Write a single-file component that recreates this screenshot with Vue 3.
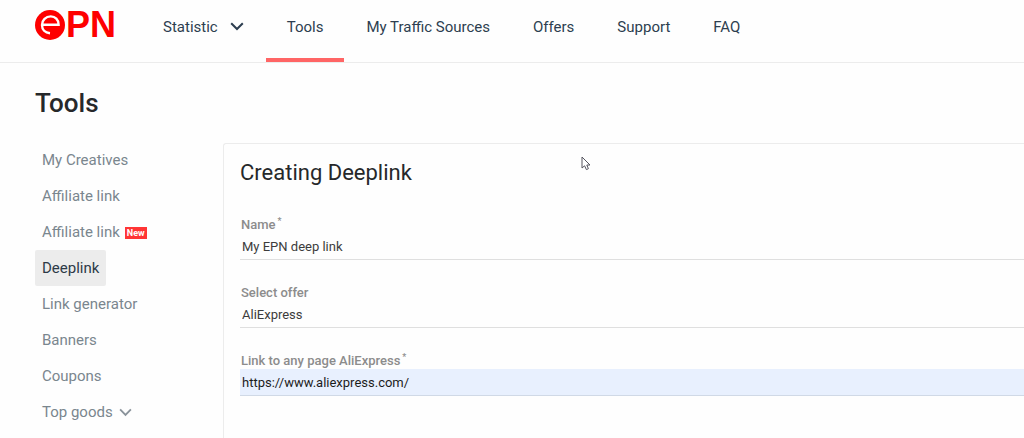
<script setup>
import { ref } from 'vue'

const nav = [
  { label: 'Statistic', menu: true },
  { label: 'Tools', active: true },
  { label: 'My Traffic Sources' },
  { label: 'Offers' },
  { label: 'Support' },
  { label: 'FAQ' },
]

const tools = [
  { label: 'My Creatives' },
  { label: 'Affiliate link' },
  { label: 'Affiliate link', badge: 'New' },
  { label: 'Deeplink', active: true },
  { label: 'Link generator' },
  { label: 'Banners' },
  { label: 'Coupons' },
  { label: 'Top goods', menu: true },
]

const name = ref('My EPN deep link')
const offer = ref('AliExpress')
const link = ref('https://www.aliexpress.com/')
</script>

<template>
  <div class="page">
    <header class="header">
      <a class="logo" href="#" aria-label="EPN">
        <svg class="logo-mark" viewBox="0 0 30 30" aria-hidden="true">
          <circle cx="15" cy="15" r="15" fill="#fe0000" />
          <path d="M7 14.8H23.6C23.6 9.6 20.2 6.4 15.8 6.4C10.8 6.4 7 10 7 15C7 19.6 10 22.8 15 23.2" fill="none" stroke="#fff" stroke-width="2.4" />
        </svg>
        <span class="logo-text">PN</span>
      </a>
      <nav class="nav" aria-label="Main">
        <a v-for="item in nav" :key="item.label" href="#" class="nav-item" :class="{ active: item.active }">
          {{ item.label }}
          <svg v-if="item.menu" class="chevron" viewBox="0 0 14 9" aria-hidden="true">
            <path d="M1.2 1.2L7 7L12.8 1.2" />
          </svg>
        </a>
      </nav>
    </header>

    <main class="main">
      <h1>Tools</h1>
      <div class="columns">
        <nav class="side" aria-label="Tools">
          <a v-for="(item, i) in tools" :key="i" href="#" class="side-item" :class="{ active: item.active }">
            {{ item.label }}
            <span v-if="item.badge" class="badge">{{ item.badge }}</span>
            <svg v-if="item.menu" class="chevron small" viewBox="0 0 14 9" aria-hidden="true">
              <path d="M1.2 1.2L7 7L12.8 1.2" />
            </svg>
          </a>
        </nav>

        <form class="card" @submit.prevent>
          <h2>Creating Deeplink</h2>
          <div class="field">
            <label for="name">Name<sup>*</sup></label>
            <input id="name" v-model="name" type="text" />
          </div>
          <div class="field">
            <label for="offer">Select offer</label>
            <select id="offer" v-model="offer">
              <option>AliExpress</option>
            </select>
          </div>
          <div class="field">
            <label for="link">Link to any page AliExpress<sup>*</sup></label>
            <input id="link" v-model="link" class="filled" type="text" />
          </div>
        </form>
      </div>
    </main>

    <svg class="pointer" viewBox="0 0 10 15" aria-hidden="true">
      <path d="M1 1V12L3.6 9.8L5.4 13.6L7.4 12.7L5.8 9H9Z" fill="#fff" stroke="#55555f" stroke-width="1" />
    </svg>
  </div>
</template>

<style>
body {
  margin: 0;
  background: #fefefe;
}
</style>

<style scoped>
.page {
  position: relative;
  display: flex;
  flex-direction: column;
  min-height: 100vh;
  font-family: Roboto, "Liberation Sans", sans-serif;
  color: #26282a;
}
a {
  color: inherit;
  text-decoration: none;
}
.header {
  display: flex;
  height: 62px;
  padding-left: 35px;
  border-bottom: 1px solid #ececec;
}
.logo {
  display: flex;
  align-items: center;
  width: 107px;
  height: 50px;
  color: #fe0000;
}
.logo-mark {
  width: 30px;
  height: 30px;
}
.logo-text {
  margin-left: 1px;
  font: bold 36px/28px "Liberation Sans", sans-serif;
}
.nav {
  display: flex;
  gap: 1px;
}
.nav-item {
  display: flex;
  align-items: center;
  box-sizing: border-box;
  padding: 0 21px 5px;
  border-bottom: 4px solid transparent;
  font-size: 15px;
  color: #2d3e50;
  white-space: nowrap;
}
.nav-item.active {
  border-bottom-color: #ff6565;
}
.chevron {
  width: 14px;
  height: 9px;
  margin-left: 12px;
  fill: none;
  stroke: currentColor;
  stroke-width: 2;
}
.chevron.small {
  margin-left: 6px;
  width: 13px;
  color: #8a939b;
}
.main {
  display: flex;
  flex: 1;
  flex-direction: column;
  padding-left: 35px;
}
h1 {
  margin: 0;
  padding: 24px 0 23px;
  font-size: 26px;
  line-height: 32px;
  font-weight: 500;
}
.columns {
  display: flex;
  flex: 1;
}
.side {
  display: flex;
  flex-direction: column;
  align-items: flex-start;
  width: 188px;
  flex-shrink: 0;
}
.side-item {
  display: flex;
  align-items: center;
  height: 36px;
  padding: 0 7px;
  border-radius: 2px;
  font-size: 15px;
  color: #7a868e;
}
.side-item.active {
  background: #ececec;
  color: #2d3a47;
}
.badge {
  margin: 2px 0 0 5px;
  padding: 0 2px;
  background: #ff3535;
  color: #fff;
  font-size: 9px;
  line-height: 12px;
  font-weight: 700;
}
.card {
  flex: 1;
  min-width: 0;
  margin-top: 1px;
  padding: 13px 0 0 16px;
  border: 1px solid #ececec;
  border-width: 1px 0 0 1px;
  border-radius: 3px 0 0 0;
}
h2 {
  margin: 0 0 27px;
  font-size: 22px;
  line-height: 32px;
  font-weight: 400;
}
.field {
  display: flex;
  flex-direction: column;
  margin-bottom: 24px;
}
label {
  padding-left: 1px;
  font-size: 13px;
  line-height: 17px;
  font-weight: 500;
  color: #8c8c8c;
}
sup {
  margin-left: 2px;
  font-size: 9px;
  line-height: 0;
}
input,
select {
  width: 100%;
  height: 27px;
  box-sizing: border-box;
  margin: 0;
  padding: 1px 2px 0;
  border: 0;
  border-bottom: 1px solid #dfdfdf;
  border-radius: 0;
  background: transparent;
  appearance: none;
  outline: none;
  font: 13px/20px Roboto, "Liberation Sans", sans-serif;
  color: #3c3c3c;
}
.filled {
  background: #e8f0fe;
  border-bottom-color: #d0d9e6;
  color: #1c1c1c;
}
.pointer {
  position: absolute;
  left: 581px;
  top: 156px;
  width: 10px;
  height: 15px;
}
</style>
